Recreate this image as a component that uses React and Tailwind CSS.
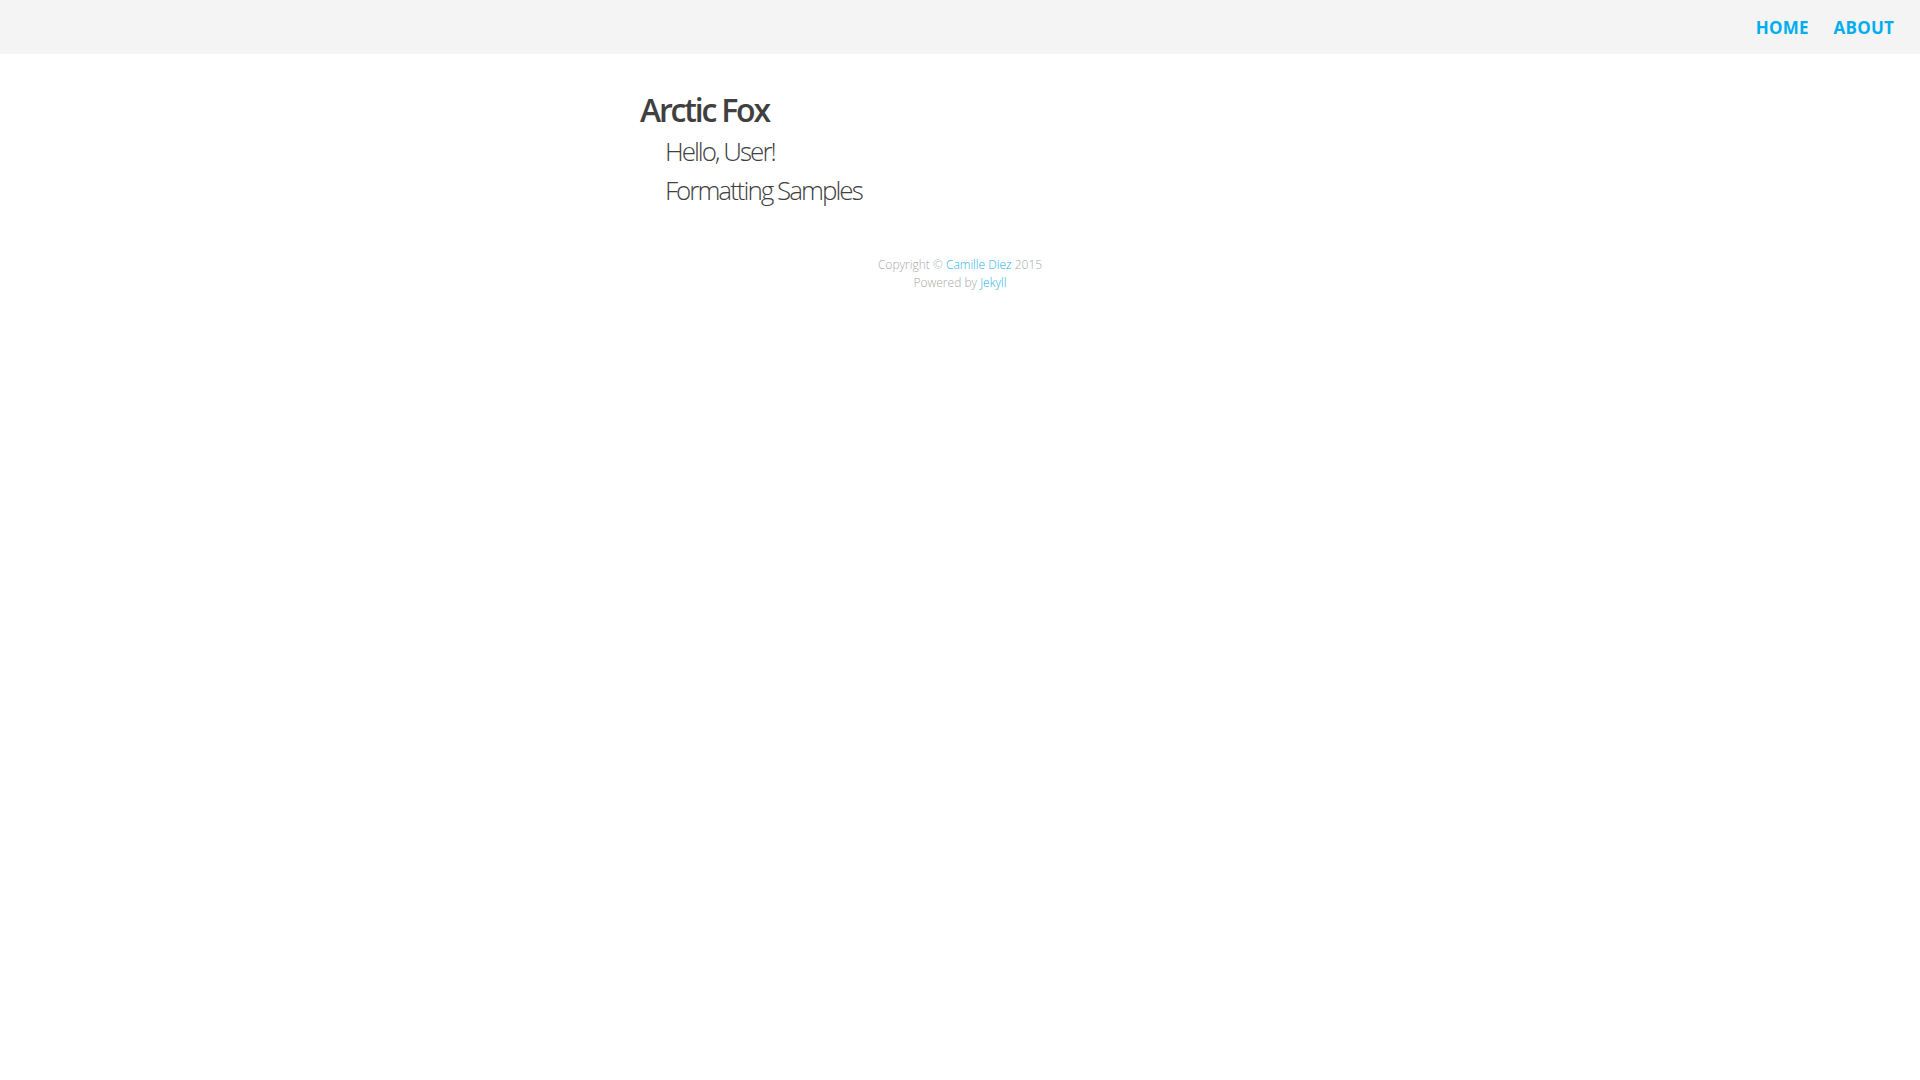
export default function App() {
  return (
    <div className="min-h-screen bg-white text-[#404040] font-['Open_Sans',sans-serif]">
      <nav className="h-[54px] bg-[#f4f4f4] flex items-center justify-end pt-[2px] pr-[26px] gap-[25px]">
        <a href="#" className="text-[17px] font-bold tracking-[0.2px] text-[#00aeef]">
          HOME
        </a>
        <a href="#" className="text-[17px] font-bold tracking-[0.2px] text-[#00aeef]">
          ABOUT
        </a>
      </nav>

      <main className="w-[640px] mx-auto pt-[36px]">
        <h1 className="text-[32px] leading-[40px] font-semibold tracking-[-2.2px] text-[#404040]">
          Arctic Fox
        </h1>
        <ul className="mt-[2px] pl-[25px] font-['Open_Sans_Light','Open_Sans',sans-serif]">
          <li className="text-[26px] leading-[39px] font-light tracking-[-2px] text-[#404040]">
            <a href="#">Hello, User!</a>
          </li>
          <li className="text-[26px] leading-[39px] font-light tracking-[-2px] text-[#404040]">
            <a href="#">Formatting Samples</a>
          </li>
        </ul>
      </main>

      <footer className="mt-[46px] text-center text-[12px] leading-[18px] font-light text-[#a8a8a8]">
        <p>
          Copyright © <a href="#" className="text-[#1fb3e8]">Camille Diez</a> 2015
        </p>
        <p>
          Powered by <a href="#" className="text-[#1fb3e8]">Jekyll</a>
        </p>
      </footer>
    </div>
  );
}
